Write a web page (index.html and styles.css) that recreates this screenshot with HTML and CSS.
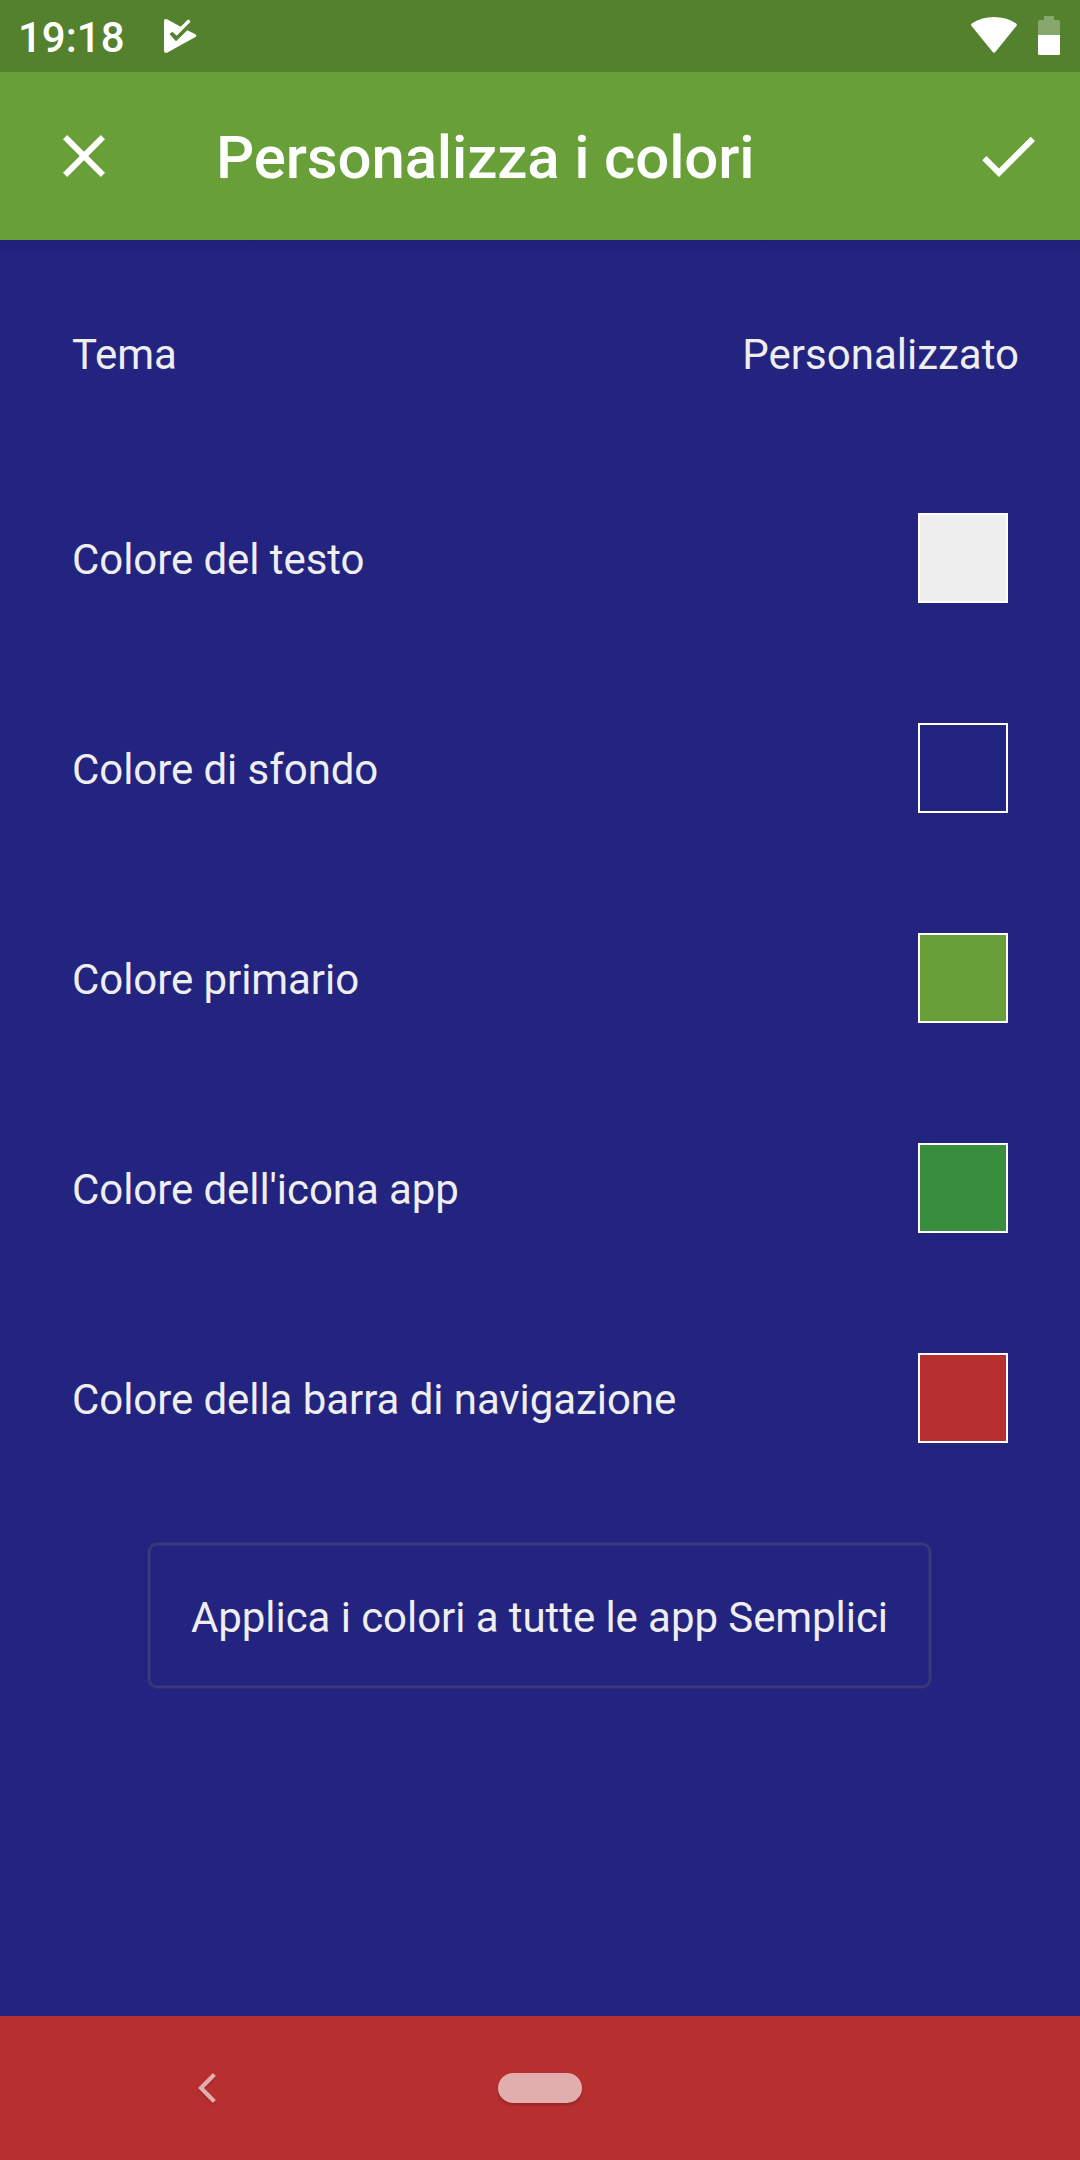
FILE: index.html
```html
<!DOCTYPE html>
<html lang="it">
<head>
<meta charset="utf-8">
<title>Personalizza i colori</title>
<link rel="stylesheet" href="styles.css">
</head>
<body>
<div class="screen">
  <header class="status">
    <span class="clock">19:18</span>
    <svg class="play" width="34" height="36" viewBox="0 0 34 36"><path d="M1 3Q1 .3 4 1.300L17.700 8.700L24.700 1.700Q25.500 1.100 26.300 2L27.200 3Q27.600 3.700 27 4.300L13.700 17.700L9.300 13.700L6.500 16L13 23.300L24.300 12.200L32.400 16.300Q34.200 17.700 32.400 19L4 34.800Q1 35.500 1 32.500Z" fill="#fff"/></svg>
    <svg class="wifi" width="46" height="36" viewBox="0 0 46 36"><path d="M.6 9Q-.6 7.600 1.200 6.200C13.500-2 32.500-2 44.800 6.200Q46.600 7.600 45.400 9L24.500 34.800Q23 36.600 21.500 34.800Z" fill="#fff"/></svg>
    <svg class="battery" width="22" height="39" viewBox="0 0 22 39"><path d="M6 0H16V4H20Q22 4 22 6V19H0V6Q0 4 2 4H6Z" fill="#fff" opacity=".3"/><path d="M0 19H22V37.500Q22 39 20.500 39H1.500Q0 39 0 37.500Z" fill="#fff"/></svg>
  </header>
  <div class="toolbar">
    <svg width="72" height="72" viewBox="0 0 24 24" fill="#fff"><path d="M19 6.410 17.590 5 12 10.590 6.410 5 5 6.410 10.590 12 5 17.590 6.410 19 12 13.410 17.590 19 19 17.590 13.410 12z"/></svg>
    <h1>Personalizza i colori</h1>
    <svg width="72" height="72" viewBox="0 0 24 24" fill="#fff"><path d="M9 16.170 4.830 12l-1.420 1.410L9 19 21 7l-1.410-1.410z"/></svg>
  </div>
  <main>
    <div class="row theme"><span>Tema</span><span class="value">Personalizzato</span></div>
    <div class="row"><span>Colore del testo</span><i class="swatch text"></i></div>
    <div class="row"><span>Colore di sfondo</span><i class="swatch background"></i></div>
    <div class="row"><span>Colore primario</span><i class="swatch primary"></i></div>
    <div class="row"><span>Colore dell'icona app</span><i class="swatch icon"></i></div>
    <div class="row"><span>Colore della barra di navigazione</span><i class="swatch navigation"></i></div>
    <button class="apply">Applica i colori a tutte le app Semplici</button>
  </main>
  <nav>
    <svg class="back" width="18" height="30" viewBox="0 0 18 30"><path d="M16.400 1.600L3 15L16.400 28.400" fill="none" stroke="#e2adad" stroke-width="4.200"/></svg>
    <span class="home"></span>
  </nav>
</div>
</body>
</html>
```
FILE: styles.css
```css
* { box-sizing: border-box; }
body { margin: 0; font-family: Roboto, sans-serif; }
.screen { width: 1080px; height: 2160px; display: flex; flex-direction: column; background: #232380; color: #eee; font-size: 42px; line-height: 50px; letter-spacing: -0.07px; }
.status { height: 72px; display: flex; align-items: flex-start; padding: 0 20px 0 18px; background: #54812d; color: #fff; }
.clock { width: 145px; padding-top: 13px; font-weight: 500; letter-spacing: 0; }
.play { margin-top: 18px; }
.wifi { margin: 17px 21px 0 auto; }
.battery { margin-top: 16px; }
.toolbar { height: 168px; display: flex; align-items: center; padding: 0 36px 0 48px; background: #689f38; color: #fff; }
.toolbar h1 { flex: 1; margin: 3px 0 0 96px; font-size: 60px; line-height: 70px; font-weight: 500; letter-spacing: -0.15px; }
main { flex: 1; display: flex; flex-direction: column; background: linear-gradient(#202078, #232380 14px); }
.row { height: 210px; display: flex; align-items: center; justify-content: space-between; padding: 0 72px; }
.row span { padding-top: 3px; }
.theme { height: 213px; padding: 0 60px 0 72px; }
.theme span { margin-top: 13px; }
.theme .value { margin-right: 1px; letter-spacing: 0; }
.swatch { width: 90px; height: 90px; border: 2px solid #fff; }
.text { background: #eee; }
.background { background: #232380; }
.primary { background: #689f38; }
.icon { background: #388e3c; }
.navigation { background: #b72f2f; }
.apply { align-self: center; width: 783px; height: 145px; margin: 40px 2px 0 0; padding: 4px 0 0 1px; border: 2px solid #3b3b7a; border-radius: 9px; box-shadow: 0 0 0 1px #2d2d7d, inset 0 0 0 1px #2d2d7d; background: none; color: inherit; font: inherit; letter-spacing: inherit; white-space: nowrap; }
nav { height: 144px; display: flex; align-items: center; background: #b72f2f; }
.back { margin-left: 198px; filter: drop-shadow(0 2px 1px rgba(0,0,0,.15)); }
.home { width: 84px; height: 30px; margin-left: 282px; border-radius: 15px; background: #e2adad; box-shadow: 0 2px 3px rgba(0,0,0,.2); }
```
